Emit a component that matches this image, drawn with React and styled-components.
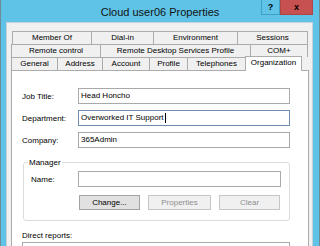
import React from 'react'
import styled, { createGlobalStyle } from 'styled-components'

const Global = createGlobalStyle`
  html, body { margin: 0; padding: 0; background: #ffffff; }
  #root { width: 320px; height: 246px; overflow: hidden; }
  * { box-sizing: border-box; }
`

const Frame = styled.div`
  width: 320px;
  height: 246px;
  background: #5fc3e8;
  border-left: 1px solid #6e8c98;
  border-right: 1px solid #6e8c98;
  padding: 0 6px 0 5px;
  display: flex;
  flex-direction: column;
  font-family: "Liberation Sans", Arial, sans-serif;
  color: #000;
`

const TitleBar = styled.div`
  height: 22px;
  margin: 0 -6px 0 -5px;
  display: grid;
  grid-template-columns: 1fr auto 1fr;
`

const Title = styled.div`
  grid-column: 2;
  font-size: 11px;
  line-height: 24px;
  color: #111;
`

const Controls = styled.div`
  grid-column: 3;
  justify-self: end;
  display: flex;
  height: 15px;
  margin-right: 6px;
`

const CtlButton = styled.div`
  width: ${p => p.$w}px;
  height: 15px;
  display: flex;
  align-items: center;
  justify-content: center;
  font-size: 9px;
  font-weight: bold;
  background: ${p => (p.$close ? '#c75050' : '#5fc3e8')};
  border: 1px solid ${p => (p.$close ? '#b04545' : '#3f9fc6')};
  border-top: none;
  color: #000;
`

const Inner = styled.div`
  flex: 1;
  background: #f0f0f0;
  border: 1px solid #c9d3d7;
  border-bottom: none;
  padding: 8px 0 0 4px;
`

const TabRow = styled.div`
  display: flex;
  height: 13px;
  align-items: flex-start;
  margin-left: ${p => p.$indent || 0}px;
`

const Tab = styled.div`
  width: ${p => p.$w}px;
  height: ${p => (p.$active ? 15 : 13)}px;
  margin-top: ${p => (p.$active ? -1 : 0)}px;
  margin-left: -1px;
  position: relative;
  z-index: ${p => (p.$active ? 2 : 1)};
  background: ${p => (p.$active ? '#ffffff' : '#f0f0f0')};
  border: 1px solid #acacac;
  border-bottom: none;
  font-size: 8px;
  line-height: 11px;
  text-align: center;
  white-space: nowrap;
  &:first-child { margin-left: 0; }
`

const Panel = styled.div`
  width: 298px;
  flex: 1;
  background: #ffffff;
  border: 1px solid #acacac;
  border-bottom: none;
  padding: 17px 0 0 10px;
  display: flex;
  flex-direction: column;
`

const Fields = styled.div`
  display: flex;
  flex-direction: column;
  gap: 6px;
`

const FieldRow = styled.div`
  display: grid;
  grid-template-columns: ${p => p.$label || 56}px ${p => p.$input || 212}px;
  align-items: center;
`

const Label = styled.div`
  font-size: 8px;
  color: #000;
`

const Input = styled.div`
  height: 16px;
  border: 1px solid ${p => (p.$focus ? '#6d8ab0' : '#a9a9a9')};
  background: #fff;
  font-size: 8px;
  line-height: 14px;
  padding-left: 2px;
  display: flex;
  align-items: center;
  white-space: nowrap;
`

const Caret = styled.span`
  display: inline-block;
  width: 1px;
  height: 10px;
  background: #000;
  margin-left: 1px;
`

const Group = styled.fieldset`
  margin: 10px 0 0 1px;
  width: 267px;
  border: 1px solid #dcdcdc;
  border-radius: 3px;
  padding: 4px 0 10px 7px;
  display: flex;
  flex-direction: column;
  gap: 8px;
`

const Legend = styled.legend`
  font-size: 8px;
  padding: 0 1px;
  margin-left: -3px;
  color: #000;
  line-height: 9px;
`

const ButtonRow = styled.div`
  display: flex;
  gap: 8px;
  margin-left: 48px;
`

const Button = styled.div`
  width: ${p => p.$w}px;
  height: 15px;
  font-size: 8px;
  display: flex;
  align-items: center;
  justify-content: center;
  background: ${p => (p.$disabled ? '#f0f0f0' : '#e1e1e1')};
  border: 1px solid ${p => (p.$disabled ? '#c6c6c6' : '#a3a3a3')};
  color: ${p => (p.$disabled ? '#8f8f8f' : '#000')};
`

const Reports = styled.div`
  margin-top: 10px;
  display: flex;
  flex-direction: column;
  gap: 2px;
`

const ListBox = styled.div`
  width: 268px;
  height: 40px;
  border: 1px solid #a9a9a9;
  background: #fff;
`

const tabRows = [
  { indent: 1, tabs: [['Member Of', 80], ['Dial-in', 63], ['Environment', 85], ['Sessions', 71]] },
  { indent: 0, tabs: [['Remote control', 90], ['Remote Desktop Services Profile', 151], ['COM+', 58]] },
  {
    indent: 0,
    tabs: [['General', 47], ['Address', 46], ['Account', 48], ['Profile', 39], ['Telephones', 59], ['Organization', 57, true]],
  },
]

export default function App() {
  return (
    <>
      <Global />
      <Frame>
        <TitleBar>
          <Title>Cloud user06 Properties</Title>
          <Controls>
            <CtlButton $w={19}>?</CtlButton>
            <CtlButton $w={33} $close>x</CtlButton>
          </Controls>
        </TitleBar>
        <Inner>
          {tabRows.map((row, i) => (
            <TabRow key={i} $indent={row.indent}>
              {row.tabs.map(([name, w, active]) => (
                <Tab key={name} $w={w} $active={active}>{name}</Tab>
              ))}
            </TabRow>
          ))}
          <Panel>
            <Fields>
              <FieldRow>
                <Label>Job Title:</Label>
                <Input>Head Honcho</Input>
              </FieldRow>
              <FieldRow>
                <Label>Department:</Label>
                <Input $focus>Overworked IT Support<Caret /></Input>
              </FieldRow>
              <FieldRow>
                <Label>Company:</Label>
                <Input>365Admin</Input>
              </FieldRow>
            </Fields>
            <Group>
              <Legend>Manager</Legend>
              <FieldRow $label={47} $input={203}>
                <Label>Name:</Label>
                <Input />
              </FieldRow>
              <ButtonRow>
                <Button $w={61}>Change...</Button>
                <Button $w={63} $disabled>Properties</Button>
                <Button $w={61} $disabled>Clear</Button>
              </ButtonRow>
            </Group>
            <Reports>
              <Label>Direct reports:</Label>
              <ListBox />
            </Reports>
          </Panel>
        </Inner>
      </Frame>
    </>
  )
}
